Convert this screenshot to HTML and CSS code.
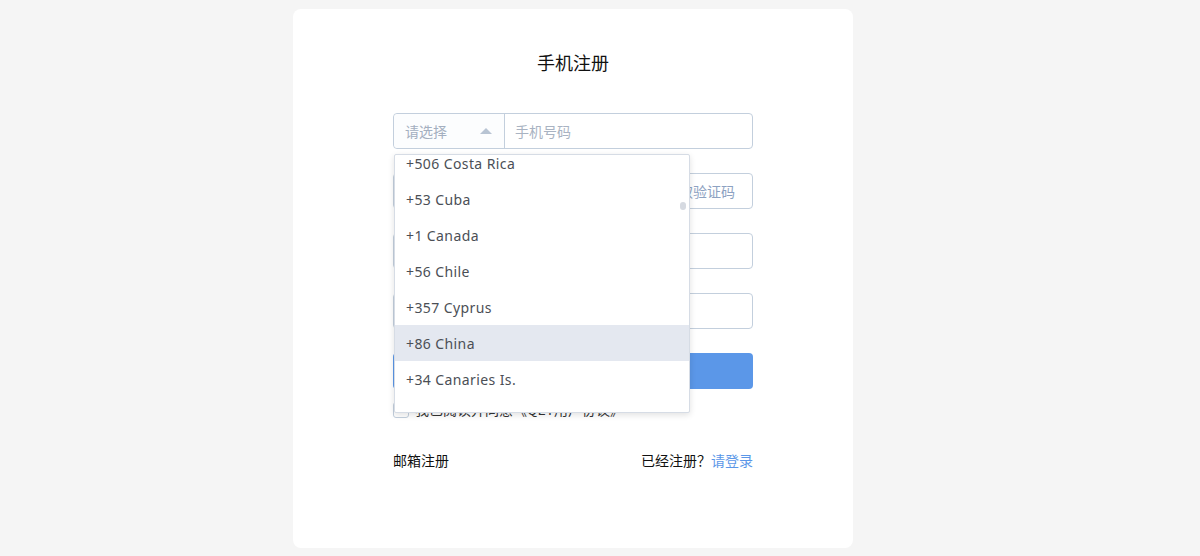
FILE: index.html
```html
<!DOCTYPE html>
<html lang="zh">
<head>
<meta charset="utf-8">
<title>手机注册</title>
<link rel="stylesheet" href="styles.css">
</head>
<body>
<div class="page">
  <div class="card">
    <h1 class="title">手机注册</h1>
    <form class="form">
      <div class="field phone">
        <div class="select">
          <span class="select-text">请选择</span>
          <span class="arrow"></span>
        </div>
        <span class="input-ph">手机号码</span>
        <div class="dropdown">
          <ul class="options">
            <li>+506 Costa Rica</li>
            <li>+53 Cuba</li>
            <li>+1 Canada</li>
            <li>+56 Chile</li>
            <li>+357 Cyprus</li>
            <li class="active">+86 China</li>
            <li>+34 Canaries Is.</li>
          </ul>
          <span class="thumb"></span>
        </div>
      </div>
      <div class="field code">
        <span class="input-ph">短信验证码</span>
        <span class="get-code">获取验证码</span>
      </div>
      <div class="field"><span class="input-ph">设置密码</span></div>
      <div class="field"><span class="input-ph">确认密码</span></div>
      <button type="button" class="submit">注册</button>
      <label class="agree"><span class="box"></span><span>我已阅读并同意《QET用户协议》</span></label>
    </form>
    <div class="links">
      <span class="email">邮箱注册</span>
      <span class="login">已经注册？<a class="blue">请登录</a></span>
    </div>
  </div>
</div>
</body>
</html>
```

FILE: styles.css
```css
* { box-sizing: border-box; }
html, body { margin: 0; padding: 0; }
body {
  background: #f5f5f5;
  font-family: "Noto Sans CJK SC", "Noto Sans", sans-serif;
  font-size: 14px;
  color: #222;
}
.page {
  padding: 9px 0 8px 293px;
}
.card {
  width: 560px;
  height: 539px;
  background: #fff;
  border-radius: 8px;
  padding-top: 41px;
}
.title {
  margin: 0;
  font-size: 18px;
  font-weight: normal;
  line-height: 24px;
  text-align: center;
  color: #111;
}
.form {
  width: 360px;
  margin: 39px auto 0;
  display: flex;
  flex-direction: column;
  gap: 24px;
}
.field {
  position: relative;
  height: 36px;
  border: 1px solid #c3cfdd;
  border-radius: 4px;
  display: flex;
  align-items: center;
  background: #fff;
}
.input-ph {
  color: #a9b3c2;
  padding-left: 12px;
  line-height: 20px;
  margin-top: -1px;
}
.phone .input-ph { padding-left: 10px; }
.select {
  width: 111px;
  height: 100%;
  border-right: 1px solid #c3cfdd;
  display: flex;
  align-items: center;
  justify-content: space-between;
  padding: 0 12px 0 11px;
  background: #fcfdfe;
  border-radius: 4px 0 0 4px;
}
.select-text { color: #a4afc0; margin-top: -1px; }
.arrow {
  width: 0;
  height: 0;
  border-left: 6px solid transparent;
  border-right: 6px solid transparent;
  border-bottom: 6px solid #b8c4d3;
  margin-top: -1px;
}
.code { justify-content: space-between; }
.get-code {
  color: #8da2c2;
  padding-right: 17px;
  margin-top: -1px;
}
.dropdown {
  position: absolute;
  top: 40px;
  left: 0;
  width: 296px;
  height: 259px;
  background: #fff;
  border: 1px solid #d6dce5;
  border-radius: 2px;
  box-shadow: 0 2px 6px rgba(0, 0, 0, 0.12);
  overflow: hidden;
  z-index: 10;
}
.options {
  list-style: none;
  margin: -10px 0 0;
  padding: 0;
}
.options li {
  height: 36px;
  line-height: 38px;
  padding-left: 11px;
  color: #4b4f56;
  font-family: "Noto Sans", "Noto Sans CJK SC", sans-serif;
  font-size: 14px;
  letter-spacing: 0.4px;
}
.options li.active { background: #e4e8f0; }
.thumb {
  position: absolute;
  right: 3px;
  top: 47px;
  width: 6px;
  height: 8px;
  border-radius: 3px;
  background: #d6dae1;
}
.submit {
  height: 36px;
  border: none;
  border-radius: 4px;
  background: #5b97e8;
  color: #fff;
  font-family: inherit;
  font-size: 14px;
  padding: 0;
}
.agree {
  display: flex;
  align-items: center;
  gap: 6px;
  height: 20px;
  margin-top: -14px;
  font-size: 14px;
  color: #333;
}
.box {
  width: 16px;
  height: 16px;
  border: 1px solid #c3cfdd;
  border-radius: 3px;
  margin-top: 2px;
}
.links {
  width: 360px;
  margin: 31px auto 0;
  display: flex;
  justify-content: space-between;
  line-height: 20px;
  color: #111;
}
.blue { color: #5b97e8; }
```
